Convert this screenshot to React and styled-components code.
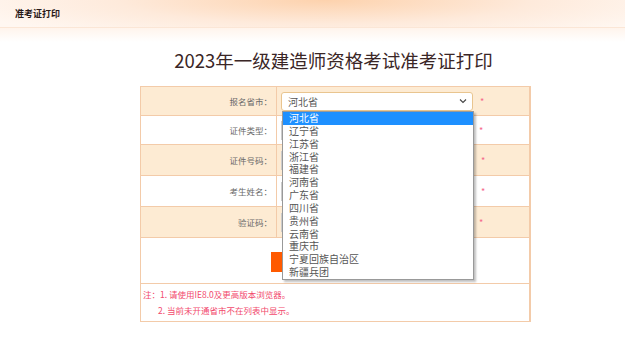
import React from 'react';
import styled, { createGlobalStyle } from 'styled-components';

const GlobalStyle = createGlobalStyle`
  body {
    margin: 0;
    background: #fff;
    font-family: "Noto Sans CJK SC", "Noto Sans", sans-serif;
  }
`;

const TopBar = styled.header`
  height: 27px;
  display: flex;
  align-items: center;
  padding-left: 15px;
  border-bottom: 1px solid #fbe6d6;
  background: radial-gradient(ellipse 60% 160% at 52% 0%, #fdd2ad 0%, #feeadb 55%, #fff7f1 100%);
  font-size: 9px;
  font-weight: bold;
  color: #2a1a1a;
`;

const Glow = styled.div`
  height: 14px;
  background: linear-gradient(#fff4ec, #fff);
`;

const Title = styled.h1`
  margin: 0;
  padding: 8px 0 0 42px;
  text-align: center;
  font-size: 18.5px;
  font-weight: normal;
  color: #3a2626;
  line-height: 20px;
`;

const Table = styled.div`
  width: 388px;
  margin: 16px 0 0 140px;
  border: 1px solid #f3cba9;
  border-right-width: 2px;
  position: relative;
`;

const Row = styled.div`
  display: grid;
  grid-template-columns: 136px 1fr;
  height: ${p => p.h}px;
  background: ${p => (p.shade ? '#fdebd3' : '#fff')};
  border-bottom: 1px solid #f3cba9;
`;

const Label = styled.div`
  display: flex;
  align-items: center;
  justify-content: flex-end;
  padding-right: 4px;
  border-right: 1px solid #f3cba9;
  font-size: 8.5px;
  color: #6a6a6a;
`;

const Field = styled.div`
  display: flex;
  align-items: center;
  padding-left: 4px;
`;

const Select = styled.div`
  width: 192px;
  height: 19px;
  box-sizing: border-box;
  border: 1px solid #e9c58f;
  border-radius: 3px;
  background: #fff;
  display: flex;
  align-items: center;
  justify-content: space-between;
  padding: 0 5px 0 6px;
  font-size: 10px;
  color: #555;
`;

const Input = styled.div`
  width: 192px;
  height: 19px;
  box-sizing: border-box;
  border: 1px solid #ccc;
  background: #fff;
`;

const Star = styled.span`
  color: #f5688a;
  font-size: 9px;
  margin-left: ${p => p.off}px;
`;

const ButtonRow = styled.div`
  height: 45px;
  display: flex;
  align-items: center;
  justify-content: center;
  border-bottom: 1px solid #f3cba9;
  padding-left: 2px;
`;

const PrintButton = styled.button`
  width: 130px;
  height: 20px;
  margin-top: 3px;
  border: none;
  background: #ff5a00;
  color: #fff;
  font-family: inherit;
  font-size: 10px;
`;

const Notes = styled.div`
  height: 37px;
  padding: 2px 0 0 2px;
  box-sizing: border-box;
  font-size: 8.5px;
  color: #f24a6d;
  line-height: 16px;
`;

const Indent = styled.div`
  padding-left: 15px;
`;

const Dropdown = styled.ul`
  position: absolute;
  top: 24px;
  left: 141px;
  width: 192px;
  margin: 0;
  padding: 0;
  list-style: none;
  box-sizing: border-box;
  background: #fff;
  border: 1px solid #999;
  box-shadow: 2px 2px 2px rgba(0, 0, 0, 0.25);
  z-index: 2;
`;

const Option = styled.li`
  height: 12.85px;
  line-height: 12.85px;
  padding-left: 6px;
  font-size: 10px;
  color: ${p => (p.active ? '#fff' : '#555')};
  background: ${p => (p.active ? '#1e90ff' : 'transparent')};
`;

const Chevron = () => (
  <svg width="8" height="6" viewBox="0 0 8 6">
    <path d="M1 1.5 L4 4.5 L7 1.5" fill="none" stroke="#444" strokeWidth="1.1" />
  </svg>
);

const provinces = [
  '河北省', '辽宁省', '江苏省', '浙江省', '福建省', '河南省', '广东省',
  '四川省', '贵州省', '云南省', '重庆市', '宁夏回族自治区', '新疆兵团',
];

const fields = [
  { label: '证件类型：', h: 28, shade: false, off: 6 },
  { label: '证件号码：', h: 30, shade: true, off: 8 },
  { label: '考生姓名：', h: 30, shade: false, off: 8 },
  { label: '验证码：', h: 30, shade: true, off: 6 },
];

export default function App() {
  return (
    <>
      <GlobalStyle />
      <TopBar>准考证打印</TopBar>
      <Glow />
      <Title>2023年一级建造师资格考试准考证打印</Title>
      <Table>
        <Row h={28} shade>
          <Label>报名省市：</Label>
          <Field>
            <Select>
              河北省
              <Chevron />
            </Select>
            <Star off={7}>*</Star>
          </Field>
        </Row>
        {fields.map(f => (
          <Row key={f.label} h={f.h} shade={f.shade}>
            <Label>{f.label}</Label>
            <Field>
              <Input />
              <Star off={f.off}>*</Star>
            </Field>
          </Row>
        ))}
        <ButtonRow>
          <PrintButton>打印准考证</PrintButton>
        </ButtonRow>
        <Notes>
          <div>注：1. 请使用IE8.0及更高版本浏览器。</div>
          <Indent>2. 当前未开通省市不在列表中显示。</Indent>
        </Notes>
        <Dropdown>
          {provinces.map((p, i) => (
            <Option key={p} active={i === 0}>{p}</Option>
          ))}
        </Dropdown>
      </Table>
    </>
  );
}
